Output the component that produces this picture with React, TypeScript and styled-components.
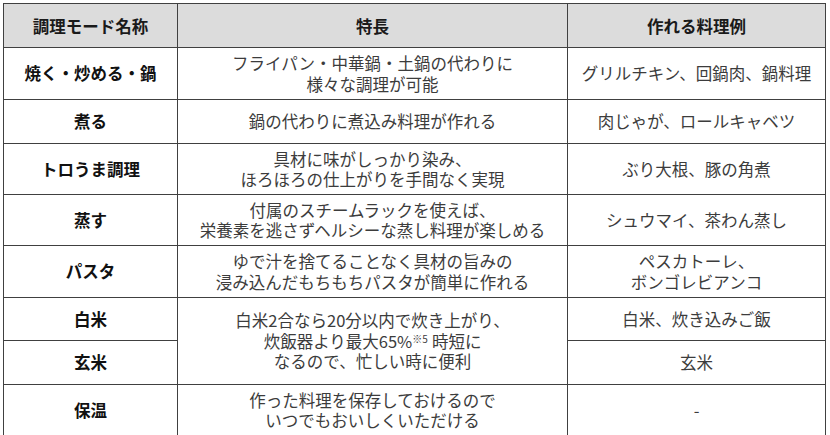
import React from "react";
import styled, { createGlobalStyle } from "styled-components";

const GlobalStyle = createGlobalStyle`
  body {
    margin: 0;
    background: #fff;
    font-family: "Noto Sans CJK JP", "Noto Sans", sans-serif;
  }
`;

const Wrapper = styled.div`
  padding: 3px 0 0 3px;
`;

const Table = styled.table`
  border-collapse: collapse;
  table-layout: fixed;
  width: 822px;
  font-size: 16.5px;
  line-height: 20.5px;
  color: #3c3c3c;
`;

const HeadCell = styled.th`
  background: #dcdcdc;
  border: 1px solid #404040;
  color: #1a1a1a;
  font-weight: 700;
  height: 41px;
  padding: 2px 0 0;
  text-align: center;
`;

const ModeCell = styled.td<{ $h: number }>`
  border: 1px solid #404040;
  color: #111;
  font-weight: 700;
  height: ${(p) => p.$h - 1}px;
  padding: 0;
  text-align: center;
`;

const TextCell = styled.td`
  border: 1px solid #404040;
  padding: 0;
  text-align: center;
  vertical-align: middle;
`;

const Note = styled.sup`
  font-size: 10px;
  line-height: 0;
  vertical-align: 5px;
  margin-right: 4px;
`;

type Row = {
  mode: string;
  h: number;
  feature?: React.ReactNode;
  span?: number;
  dishes: React.ReactNode;
};

const rows: Row[] = [
  {
    mode: "焼く・炒める・鍋",
    h: 52,
    feature: (
      <>
        フライパン・中華鍋・土鍋の代わりに
        <br />
        様々な調理が可能
      </>
    ),
    dishes: "グリルチキン、回鍋肉、鍋料理",
  },
  {
    mode: "煮る",
    h: 44,
    feature: "鍋の代わりに煮込み料理が作れる",
    dishes: "肉じゃが、ロールキャベツ",
  },
  {
    mode: "トロうま調理",
    h: 51,
    feature: (
      <>
        具材に味がしっかり染み、
        <br />
        ほろほろの仕上がりを手間なく実現
      </>
    ),
    dishes: "ぶり大根、豚の角煮",
  },
  {
    mode: "蒸す",
    h: 51,
    feature: (
      <>
        付属のスチームラックを使えば、
        <br />
        栄養素を逃さずヘルシーな蒸し料理が楽しめる
      </>
    ),
    dishes: "シュウマイ、茶わん蒸し",
  },
  {
    mode: "パスタ",
    h: 52,
    feature: (
      <>
        ゆで汁を捨てることなく具材の旨みの
        <br />
        浸み込んだもちもちパスタが簡単に作れる
      </>
    ),
    dishes: (
      <>
        ペスカトーレ、
        <br />
        ボンゴレビアンコ
      </>
    ),
  },
  {
    mode: "白米",
    h: 43,
    span: 2,
    feature: (
      <>
        白米2合なら20分以内で炊き上がり、
        <br />
        炊飯器より最大65%<Note>※5</Note>時短に
        <br />
        なるので、忙しい時に便利
      </>
    ),
    dishes: "白米、炊き込みご飯",
  },
  { mode: "玄米", h: 44, dishes: "玄米" },
  {
    mode: "保温",
    h: 51,
    feature: (
      <>
        作った料理を保存しておけるので
        <br />
        いつでもおいしくいただける
      </>
    ),
    dishes: "-",
  },
];

export default function App() {
  return (
    <Wrapper>
      <GlobalStyle />
      <Table>
        <colgroup>
          <col style={{ width: 174 }} />
          <col style={{ width: 390 }} />
          <col style={{ width: 258 }} />
        </colgroup>
        <thead>
          <tr>
            <HeadCell>調理モード名称</HeadCell>
            <HeadCell>特長</HeadCell>
            <HeadCell>作れる料理例</HeadCell>
          </tr>
        </thead>
        <tbody>
          {rows.map((row) => (
            <tr key={row.mode}>
              <ModeCell $h={row.h}>{row.mode}</ModeCell>
              {row.feature !== undefined && (
                <TextCell rowSpan={row.span}>{row.feature}</TextCell>
              )}
              <TextCell>{row.dishes}</TextCell>
            </tr>
          ))}
        </tbody>
      </Table>
    </Wrapper>
  );
}
